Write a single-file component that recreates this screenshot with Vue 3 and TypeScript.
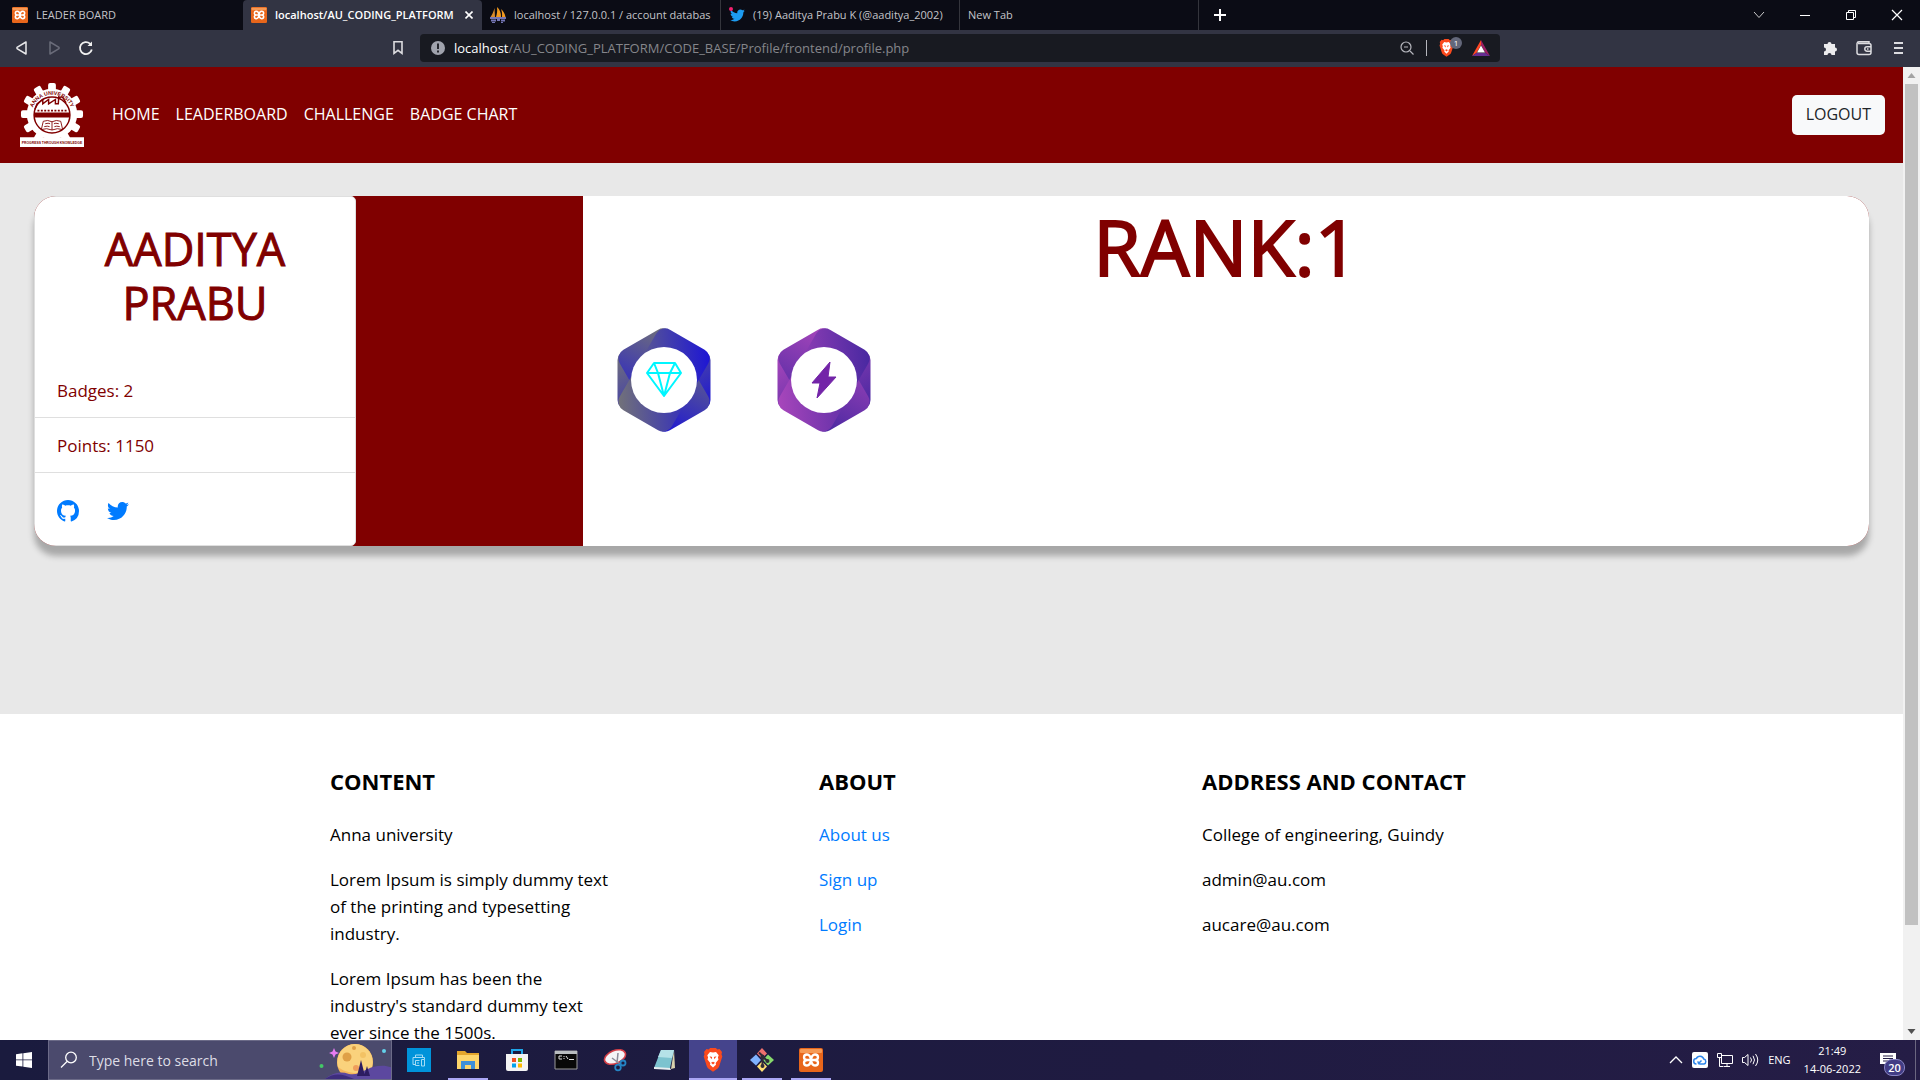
<script setup lang="ts">
interface Tab { title: string; icon: 'xampp' | 'pma' | 'twitter' | null; active?: boolean }
interface Badge { name: string; from: string; to: string; icon: 'diamond' | 'bolt' }

const tabs: Tab[] = [
  { title: 'LEADER BOARD', icon: 'xampp' },
  { title: 'localhost/AU_CODING_PLATFORM', icon: 'xampp', active: true },
  { title: 'localhost / 127.0.0.1 / account databas', icon: 'pma' },
  { title: '(19) Aaditya Prabu K (@aaditya_2002)', icon: 'twitter' },
  { title: 'New Tab', icon: null },
]
const navLinks = ['HOME', 'LEADERBOARD', 'CHALLENGE', 'BADGE CHART']
const badges: Badge[] = [
  { name: 'diamond', from: '#757575', to: '#1a12d8', icon: 'diamond' },
  { name: 'bolt', from: '#ab47bc', to: '#4527a0', icon: 'bolt' },
]
const aboutLinks = ['About us', 'Sign up', 'Login']
const teeth = Array.from({ length: 12 }, (_, i) => i * 30).filter((a) => a !== 180)
const apps = [
  { id: 'printer', label: 'Print', state: '' },
  { id: 'folder', label: 'File Explorer', state: 'open' },
  { id: 'store', label: 'Microsoft Store', state: '' },
  { id: 'cmd', label: 'Command Prompt', state: '' },
  { id: 'snip', label: 'Snipping Tool', state: '' },
  { id: 'notepad', label: 'Notepad', state: '' },
  { id: 'brave', label: 'Brave', state: 'open current' },
  { id: 'git', label: 'Git', state: 'open' },
  { id: 'xampp', label: 'XAMPP', state: 'open' },
]
const twitterPath = 'M459.37 151.716c.325 4.548.325 9.097.325 13.645 0 138.72-105.583 298.558-298.558 298.558-59.452 0-114.68-17.219-161.137-47.106 8.447.974 16.568 1.299 25.34 1.299 49.055 0 94.213-16.568 130.274-44.832-46.132-.975-84.792-31.188-98.112-72.772 6.498.974 12.995 1.624 19.818 1.624 9.421 0 18.843-1.3 27.614-3.573-48.081-9.747-84.143-51.98-84.143-102.985v-1.299c13.969 7.797 30.214 12.67 47.431 13.319-28.264-18.843-46.781-51.005-46.781-87.391 0-19.492 5.197-37.36 14.294-52.954 51.655 63.675 129.3 105.258 216.365 109.807-1.624-7.797-2.599-15.918-2.599-24.04 0-57.828 46.782-104.934 104.934-104.934 30.213 0 57.502 12.67 76.67 33.137 23.715-4.548 46.456-13.32 66.599-25.34-7.798 24.366-24.366 44.833-46.132 57.827 21.117-2.273 41.584-8.122 60.426-16.243-14.292 20.791-32.161 39.308-52.628 54.253z'
const githubPath = 'M8 0C3.58 0 0 3.58 0 8c0 3.54 2.29 6.53 5.47 7.59.4.07.55-.17.55-.38 0-.19-.01-.82-.01-1.49-2.01.37-2.53-.49-2.69-.94-.09-.23-.48-.94-.82-1.13-.28-.15-.68-.52-.01-.53.63-.01 1.08.58 1.23.82.72 1.21 1.87.87 2.33.66.07-.52.28-.87.51-1.07-1.78-.2-3.64-.89-3.64-3.95 0-.87.31-1.59.82-2.15-.08-.2-.36-1.02.08-2.12 0 0 .67-.21 2.2.82.64-.18 1.32-.27 2-.27.68 0 1.36.09 2 .27 1.53-1.04 2.2-.82 2.2-.82.44 1.1.16 1.92.08 2.12.51.56.82 1.27.82 2.15 0 3.07-1.87 3.75-3.65 3.95.29.25.54.73.54 1.48 0 1.07-.01 1.93-.01 2.2 0 .21.15.46.55.38A8.012 8.012 0 0 0 16 8c0-4.42-3.58-8-8-8z'
</script>

<template>
  <div class="screen">
    <svg width="0" height="0" class="defs" aria-hidden="true">
      <symbol id="xampp" viewBox="0 0 24 24">
        <rect width="24" height="24" rx="2" fill="#e8661b" />
        <rect x="1" y="1" width="22" height="4" rx="1" fill="#f79a55" />
        <path d="M12 12C11.500 8 10 6.500 8 6.500S5 8 5 9.300 6.300 12 8.500 12h7c2.200 0 3.500-1.300 3.500-2.700S18 6.500 16 6.500 12.500 8 12 12s-2 5.500-4 5.500-3-1.500-3-2.800S6.300 12 8.500 12h7c2.200 0 3.500 1.300 3.500 2.700s-1 2.800-3 2.800-3.500-1.500-4-5.500z" fill="none" stroke="#fff" stroke-width="2.300" stroke-linejoin="round" />
      </symbol>
      <symbol id="brave" viewBox="0 0 20 24">
        <path d="M14.500 1.500 16.500 1 19 4l-.5 2.200.8 2.300-3 9.500c-.4 1.200-1 2-2 2.700L10 23.800l-4.300-3.100c-1-.7-1.600-1.500-2-2.700l-3-9.500.8-2.300L1 4l2.500-3 2 .5L7.200 0h5.600z" fill="#fb4a1d" />
        <path d="m10 4.500 3-.5 2.700 3.300-.8 2.200.6 2-2.800 3.500.3 1.700L10 19.500l-3-2.800.3-1.700-2.800-3.500.6-2-.8-2.200L7 4z" fill="#fff" />
        <path d="m6.500 8.300 2.600.7-.5 2.200zM13.500 8.300l-2.600.7.500 2.200zM8 14.700l2-1 2 1-2 1.800z" fill="#fb4a1d" />
      </symbol>
    </svg>

    <header class="tabstrip">
      <button v-for="tab in tabs" :key="tab.title" class="tab" :class="{ active: tab.active }">
        <svg v-if="tab.icon === 'xampp'" width="16" height="16"><use href="#xampp" /></svg>
        <svg v-else-if="tab.icon === 'pma'" width="16" height="16" viewBox="0 0 16 16">
          <path d="M4.500 1 5 10H0.500C2 8 3.500 5 4.500 1z" fill="#d98b2b" />
          <path d="M7 0c3 2.500 4 6 4 10H6c1-3 1.500-6 1-10zM11 2c2.500 2 4 5 4.500 8H12c.3-3 0-5.500-1-8z" fill="#f39a1f" />
          <path d="M0 11h16M1 13.500h5M7 13h3M11 13.500h4" stroke="#7576b5" stroke-width="2" /><path d="M2 15.500h3M11 15.500h2" stroke="#7576b5" />
        </svg>
        <svg v-else-if="tab.icon === 'twitter'" width="16" height="16" viewBox="0 0 16 16">
          <g transform="translate(1 1) scale(.029)"><path :d="twitterPath" fill="#1d9bf0" /></g>
          <circle cx="2" cy="2" r="2" fill="#f4216e" />
        </svg>
        <span class="tab-title">{{ tab.title }}</span>
        <svg v-if="tab.active" width="8" height="8" viewBox="0 0 8 8"><path d="m.5.5 7 7m0-7-7 7" stroke="#fff" stroke-width="1.600" /></svg>
      </button>
      <button class="new-tab" aria-label="New tab"><svg width="12" height="12" viewBox="0 0 12 12"><path d="M6 0v12M0 6h12" stroke="#fff" stroke-width="2" /></svg></button>
      <div class="window-controls">
        <button aria-label="Search tabs"><svg width="12" height="12" viewBox="0 0 12 12" fill="none" stroke="#ccc"><path d="m1 3 5 5.500L11 3" /></svg></button>
        <button aria-label="Minimize"><svg width="12" height="12" viewBox="0 0 12 12"><path d="M1 6.500h10" stroke="#fff" /></svg></button>
        <button aria-label="Restore"><svg width="12" height="12" viewBox="0 0 12 12" fill="none" stroke="#fff"><path d="M1.500 3.500h7v7h-7zM3.500 3.500v-2h7v7h-2" /></svg></button>
        <button aria-label="Close"><svg width="12" height="12" viewBox="0 0 12 12"><path d="m1 1 10 10M11 1 1 11" stroke="#fff" stroke-width="1.200" /></svg></button>
      </div>
    </header>

    <div class="toolbar">
      <div class="history">
        <button aria-label="Back"><svg width="16" height="16" viewBox="0 0 16 16" fill="none" stroke="#e8e8ea" stroke-width="1.500" stroke-linejoin="round"><path d="M12 2v12L3 8.600V7.400z" /></svg></button>
        <button aria-label="Forward"><svg width="16" height="16" viewBox="0 0 16 16" fill="none" stroke="#6a6c7a" stroke-width="1.500" stroke-linejoin="round"><path d="M4 2v12l9-5.400V7.400z" /></svg></button>
        <button aria-label="Reload"><svg width="16" height="16" viewBox="0 0 16 16" fill="none" stroke="#f0f0f0" stroke-width="1.800"><path d="M13.800 9.500A6 6 0 1 1 12 3.600l1.500 1.500" /><path d="M14 1.500v4.500H9.500z" fill="#f0f0f0" stroke="none" /></svg></button>
      </div>
      <button class="bookmark" aria-label="Bookmark"><svg width="12" height="16" viewBox="0 0 12 16" fill="none" stroke="#dcdce0" stroke-width="1.600"><path d="M2 1.800h8v11.500l-4-3-4 3z" /></svg></button>
      <div class="address">
        <svg width="14" height="14" viewBox="0 0 14 14"><circle cx="7" cy="7" r="7" fill="#a0a3ad" /><path d="M7 2.500v5.500M7 9.500v2" stroke="#181a21" stroke-width="1.800" /></svg>
        <span class="url"><span class="host">localhost</span>/AU_CODING_PLATFORM/CODE_BASE/Profile/frontend/profile.php</span>
        <svg width="14" height="14" viewBox="0 0 14 14" fill="none" stroke="#b5b6bd" stroke-width="1.200"><circle cx="6" cy="6" r="5" /><path d="m10 10 3.500 3.500M4 6h4" /></svg>
        <span class="divider"></span>
        <span class="shield"><svg width="15" height="18"><use href="#brave" /></svg><span class="count">1</span></span>
        <svg width="18" height="16" viewBox="0 0 18 16"><path d="M9 0 0 16l4.500-3L9 5z" fill="#ff4724" /><path d="m9 0 9 16-4.500-3L9 5z" fill="#9e1f63" /><path d="M0 16h18l-4.500-3h-9z" fill="#662d91" /><path d="m9 5.500 4 7H5z" fill="#fff" /></svg>
      </div>
      <div class="tools">
        <button aria-label="Extensions"><svg width="16" height="16" viewBox="0 0 16 16"><path d="M2 4h3.500a2 2 0 1 1 4 0H13v3.500a2 2 0 1 1 0 4V15H9.500a2 2 0 0 0-4 0H2v-3.500a2 2 0 0 0 0-4z" fill="#ececee" /></svg></button>
        <button aria-label="Wallet"><svg width="16" height="16" viewBox="0 0 16 16" fill="none" stroke="#dcdce0" stroke-width="1.500"><path d="M13 3.500V1.800H3A2 2 0 0 0 1 3.500v9a2 2 0 0 0 2 2h10a2 2 0 0 0 2-2v-7a2 2 0 0 0-2-2H2M15 6.800h-4a2.200 2.200 0 0 0 0 4.400h4M11 9h1.500" /></svg></button>
        <button aria-label="Menu"><svg width="16" height="16" viewBox="0 0 16 16"><path d="M4 3h9M4 8h9M4 13h9" stroke="#dcdce0" stroke-width="2" /></svg></button>
      </div>
    </div>

    <div class="viewport">
      <div class="page">
        <nav class="navbar">
          <a href="#" class="brand" aria-label="Anna University">
            <svg width="64" height="64" viewBox="0 0 132 132">
              <g fill="#fff">
                <circle cx="66" cy="64" r="52" />
                <rect v-for="a in teeth" :key="a" x="58" y="0" width="16" height="20" rx="4" :transform="`rotate(${a} 66 64)`" />
              </g>
              <circle cx="66" cy="66" r="37" fill="#fff" stroke="maroon" stroke-width="3" />
              <path d="M31 54 35 43l12-9v9l12-9v9l14-9v9h6l1-16M80 28c3 4 6-2 9 3l6 10" fill="none" stroke="maroon" stroke-width="3" />
              <path d="M29 61h74v10H29z" fill="maroon" />
              <path d="M36 57h60" stroke="maroon" stroke-width="4" stroke-dasharray="4 3" />
              <path d="M48 79q9-4 18 1 9-5 18-1l4 17q-11-4-22 1-11-5-22-1zM66 80v17M52 84q7-2 10 0M50 90q7-2 11 0M80 84q-7-2-10 0M82 90q-7-2-11 0" fill="none" stroke="maroon" stroke-width="1.800" />
              <path id="crest-arc" d="M24 58A43 43 0 0 1 108 58" fill="none" />
              <text class="crest-name"><textPath href="#crest-arc" startOffset="50%" text-anchor="middle">ANNA UNIVERSITY</textPath></text>
              <path d="M0 112h132v20H0z" fill="#fff" />
              <text class="crest-motto" x="66" y="125" text-anchor="middle">PROGRESS THROUGH KNOWLEDGE</text>
            </svg>
          </a>
          <a v-for="link in navLinks" :key="link" href="#" class="nav-link">{{ link }}</a>
          <button class="logout">LOGOUT</button>
        </nav>

        <main class="main">
          <section class="profile">
            <aside class="side">
              <div class="person">
                <h1>AADITYA PRABU</h1>
                <ul>
                  <li>Badges: 2</li>
                  <li>Points: 1150</li>
                  <li class="social">
                    <a href="#" aria-label="GitHub"><svg width="22" height="22" viewBox="0 0 16 16"><path :d="githubPath" fill="#007bff" /></svg></a>
                    <a href="#" aria-label="Twitter"><svg width="22" height="22" viewBox="0 0 512 512"><path :d="twitterPath" fill="#007bff" /></svg></a>
                  </li>
                </ul>
              </div>
            </aside>
            <div class="result">
              <h2>RANK:1</h2>
              <div class="badges">
                <svg v-for="b in badges" :key="b.name" width="94" height="106" viewBox="-47 -53 94 106" role="img" :aria-label="b.name">
                  <defs>
                    <linearGradient :id="`g-${b.name}`" x1="0" y1="0" x2="1" y2="1"><stop offset="0" :stop-color="b.from" /><stop offset="1" :stop-color="b.to" /></linearGradient>
                  </defs>
                  <rect v-for="r in [0, 60, -60]" :key="r" x="-46.500" y="-30" width="93" height="60" rx="10" :transform="`rotate(${r})`" :fill="`url(#g-${b.name})`" />
                  <circle r="33" fill="#fff" />
                  <path v-if="b.icon === 'diamond'" d="M-10-17H11L17-7 0 16-17-7zM-17-7H17M-10-17-6-7 0 16 6-7l5-10" fill="none" stroke="#00f6ff" stroke-width="2" stroke-linejoin="round" />
                  <path v-else d="M6-18-12 3h8L-7 18 12-3H4z" fill="#7324a8" stroke="#7324a8" stroke-linejoin="round" />
                </svg>
              </div>
            </div>
          </section>
        </main>

        <footer class="footer">
          <div class="footer-grid">
            <section>
              <h3>CONTENT</h3>
              <p>Anna university</p>
              <p>Lorem Ipsum is simply dummy text of the printing and typesetting industry.</p>
              <p>Lorem Ipsum has been the industry's standard dummy text ever since the 1500s.</p>
            </section>
            <section>
              <h3>ABOUT</h3>
              <p v-for="link in aboutLinks" :key="link"><a href="#">{{ link }}</a></p>
            </section>
            <section>
              <h3>ADDRESS AND CONTACT</h3>
              <p>College of engineering, Guindy</p>
              <p>admin@au.com</p>
              <p>aucare@au.com</p>
            </section>
          </div>
        </footer>
      </div>
      <div class="scrollbar">
        <svg width="17" height="17" viewBox="0 0 17 17"><path d="m8.500 6 4 5h-8z" fill="#a3a3a3" /></svg>
        <div class="track"><div class="thumb"></div></div>
        <svg width="17" height="17" viewBox="0 0 17 17"><path d="m8.500 11 4-5h-8z" fill="#505050" /></svg>
      </div>
    </div>

    <div class="taskbar">
      <button class="start" aria-label="Start"><svg width="16" height="16" viewBox="0 0 16 16" fill="#fff"><path d="M0 2.200 6.500 1.300v6.200H0zM7.300 1.200 16 0v7.500H7.300zM0 8.300h6.500v6.300L0 13.700zM7.300 8.300H16V16l-8.700-1.200z" /></svg></button>
      <label class="search">
        <svg width="18" height="18" viewBox="0 0 18 18" fill="none" stroke="#fff" stroke-width="1.300"><circle cx="11" cy="6.500" r="5.300" /><path d="m7 10.500-6 6" /></svg>
        <input type="text" placeholder="Type here to search" aria-label="Search" />
        <svg width="75" height="38" viewBox="-3 0 75 38">
          <path d="m15 7 1.500 3.500L20 12l-3.500 1.500L15 17l-1.500-3.500L10 12l3.500-1.500z" fill="#e67cf2" />
          <circle cx="2.500" cy="25" r="2" fill="#44c767" /><circle cx="65" cy="10" r="2" fill="#63d1ea" />
          <circle cx="36" cy="21" r="18" fill="#f5b65c" /><path d="M36 3a18 18 0 0 1 17 23C44 36 26 32 19 26A18 18 0 0 1 36 3z" fill="#fad27c" />
          <g fill="#dfa047"><circle cx="28" cy="16" r="4.500" /><circle cx="44" cy="14" r="3" fill="#f3c264" /><circle cx="35" cy="7" r="2" /><circle cx="37" cy="27" r="3" fill="#ef9e5c" /></g>
          <path d="M6 38c7-6 15-8 24-5 10 2 16-5 24-7s15-2 21 2v10z" fill="#5c489f" /><path d="M6 38c10-7 18-5 29 0z" fill="#3d2d7d" />
          <path d="m42 19-4 16h8zM48 25l-3 10h6z" fill="#2d1c61" />
        </svg>
      </label>
      <div class="apps">
        <button v-for="app in apps" :key="app.id" class="app" :class="app.state" :aria-label="app.label">
          <svg v-if="app.id === 'printer'" width="24" height="24" viewBox="0 0 24 24"><path d="M0 0h24v24H0z" fill="#0093da" /><g fill="none" stroke="#a5dcf5"><path d="M8.500 9.500V7h7v2.500M8 16.500H6v-7h11.500v2M12.500 12.500h-4v5h4M14.500 11.500h3v6.500h-3zM10 15h2" /></g></svg>
          <svg v-else-if="app.id === 'folder'" width="24" height="24" viewBox="0 0 24 24"><path d="M1 3h8l2 2h12v16H1z" fill="#e3a52c" /><path d="M1 7h22v14H1z" fill="#fdd56b" /><path d="M5 21v-8h14v8h-4v-4H9v4z" fill="#3d8fd9" /></svg>
          <svg v-else-if="app.id === 'store'" width="24" height="24" viewBox="0 0 24 24"><path d="M7 7V2h10v5" fill="none" stroke="#1fa6e8" stroke-width="2" /><path d="M1 6h22v15a2 2 0 0 1-2 2H3a2 2 0 0 1-2-2z" fill="#f4f4f4" /><path d="M7 10h4v4H7z" fill="#f25022" /><path d="M13 10h4v4h-4z" fill="#7fba00" /><path d="M7 15.500h4v4H7z" fill="#00a4ef" /><path d="M13 15.500h4v4h-4z" fill="#ffb900" /></svg>
          <svg v-else-if="app.id === 'cmd'" width="24" height="24" viewBox="0 0 24 24"><path d="M1 3h22v18H1z" fill="#080808" stroke="#9a9a9a" /><path d="M1 3h22v3H1z" fill="#b9bdc0" /><path d="M8 8H5v3h3M10 8v1M10 10v1M12 8l2 3M15 11.500h5" fill="none" stroke="#ddd" /></svg>
          <svg v-else-if="app.id === 'snip'" width="24" height="24" viewBox="0 0 24 24"><ellipse cx="12" cy="9" rx="11" ry="6.500" fill="#f5f5f7" stroke="#d33e47" stroke-width="1.600" transform="rotate(-22 12 9)" /><path d="m9 10 8 6M15 5l-1 10" stroke="#8c8c99" stroke-width="1.500" /><g fill="none" stroke="#2584c4" stroke-width="1.800"><circle cx="20" cy="15" r="2.500" /><circle cx="15" cy="19.500" r="2.800" /></g></svg>
          <svg v-else-if="app.id === 'notepad'" width="24" height="24" viewBox="0 0 24 24"><path d="m22 2 1 18-4 1z" fill="#d9d2ad" /><path d="M9 2h13l-4 18H2z" fill="#7cc3cf" /><path d="M9 2h13l-2 8L6 9z" fill="#b5e2e8" /><path d="m2 19 16 1 1 2-17-1z" fill="#e7eef0" /></svg>
          <svg v-else-if="app.id === 'brave'" width="20" height="24"><use href="#brave" /></svg>
          <svg v-else-if="app.id === 'git'" width="24" height="24" viewBox="0 0 24 24"><path d="m12 0 5 5.500-5 5-5-5z" fill="#f0716e" /><path d="m6 6.500 5 5.500-5 5.500L0 12z" fill="#80b3ff" /><path d="m18 6.500 6 5.500-6 5.500-5-5.500z" fill="#87d96c" /><path d="m12 13.500 5 5-5 5.500-5-5.500z" fill="#ffdf73" /><path d="M9 4.500 12.500 8v10M12.500 8.500l5 4.500" stroke="#2f2b37" stroke-width="2" fill="none" /><g fill="#2f2b37"><circle cx="12.500" cy="8.500" r="2" /><circle cx="12.500" cy="18" r="2" /><circle cx="17.500" cy="13" r="2" /></g></svg>
          <svg v-else width="24" height="24"><use href="#xampp" /></svg>
        </button>
      </div>
      <div class="tray">
        <svg width="14" height="16" viewBox="0 0 14 16" fill="none" stroke="#fff" stroke-width="1.300"><path d="m1 11 6-6 6 6" /></svg>
        <svg width="16" height="16" viewBox="0 0 16 16"><rect width="16" height="16" rx="2" fill="#fff" /><path d="M4.500 12a2.700 2.700 0 0 1-.2-5.400A4 4 0 0 1 11.800 7 2.600 2.600 0 0 1 12 12H8l-2.500-2.500M6 12 9.500 8.500" fill="none" stroke="#2f86eb" stroke-width="1.500" /></svg>
        <svg width="16" height="16" viewBox="0 0 16 16" fill="none" stroke="#fff"><path d="M4.500 3.500h11v8h-11zM7 14.500h6M10 11.500v3M.5 1.500h4v4h-4zM2.500 5.500v9h4" /></svg>
        <svg width="17" height="16" viewBox="0 0 17 16" fill="none" stroke="#fff"><path d="M.5 5.500h2l3.500-3v11l-3.500-3h-2zM8.500 5.500q2 2.500 0 5M11 3.800q3 4.200 0 8.400M13.500 2q4.500 6 0 12" /></svg>
        <span class="lang">ENG</span>
        <div class="clock"><span>21:49</span><span>14-06-2022</span></div>
        <button class="notes" aria-label="Notifications">
          <svg width="16" height="16" viewBox="0 0 16 16"><path d="M0 1h16v11H8l-3 3v-3H0z" fill="#fff" /><path d="M3 4h10M3 6.500h10M3 9h7" stroke="#241d45" /></svg>
          <span>20</span>
        </button>
      </div>
    </div>
  </div>
</template>

<style>
body { margin: 0; overflow: hidden; }
</style>

<style scoped>
* { box-sizing: border-box; }
.screen { height: 100vh; display: flex; flex-direction: column; font-family: "Open Sans", "Noto Sans", sans-serif; font-size: 17px; line-height: 27px; color: #000; }
.defs { position: absolute; }
svg { flex: none; display: block; }
button { border: 0; padding: 0; background: none; font: inherit; color: inherit; display: flex; align-items: center; justify-content: center; }
a { text-decoration: none; color: #007bff; }
h1, h2, h3, p, ul { margin: 0; padding: 0; }
ul { list-style: none; }

.tabstrip { flex: none; height: 30px; display: flex; background: #0b0c15; padding-left: 4px; }
.tab { flex: 0 1 239px; min-width: 0; justify-content: flex-start; gap: 8px; padding: 0 8px; border-right: 1px solid transparent; font-size: 11px; line-height: 16px; color: #c3c4c9; }
.tab:nth-child(n+3) { border-right-color: #34353c; }
.tab.active { background: #323443; color: #fff; font-weight: 600; border-radius: 4px 4px 0 0; }
.tab-title { flex: 1; min-width: 0; white-space: nowrap; text-align: left; }
.new-tab { width: 42px; }
.window-controls { margin-left: auto; display: flex; }
.window-controls button { width: 46px; }

.toolbar { flex: none; height: 37px; display: flex; align-items: center; padding-bottom: 1px; background: #323443; }
.history { flex: 0 1 376px; display: flex; gap: 16px; padding-left: 14px; }
.bookmark { width: 44px; }
.address { flex: 0 1 1080px; height: 28px; display: flex; align-items: center; gap: 9px; padding: 0 10px 0 11px; border-radius: 4px; background: #181a21; font-size: 13px; line-height: 18px; color: #85868b; }
.url { flex: 1; white-space: nowrap; }
.host { color: #fff; }
.divider { width: 1px; height: 16px; background: #b5b6bd; margin: 0 3px; }
.shield { position: relative; width: 24px; }
.count { position: absolute; left: 11px; top: -2px; width: 12px; height: 12px; border-radius: 6px; background: #63677a; color: #fff; font-size: 8px; line-height: 12px; text-align: center; }
.tools { flex: 1; display: flex; justify-content: flex-end; gap: 18px; padding-right: 14px; }

.viewport { flex: 1; min-height: 0; display: flex; }
.page { flex: 1; min-width: 0; overflow: hidden; background: #fff; }
.scrollbar { width: 17px; display: flex; flex-direction: column; background: #f1f1f1; }
.track { flex: 1; display: grid; grid-template-rows: 841fr 98fr; padding: 0 2px; }
.thumb { background: #c1c1c1; }

.navbar { height: 96px; display: flex; align-items: center; padding: 0 18px 0 20px; background: maroon; }
.brand { margin-right: 20px; }
.crest-name { font-family: "Liberation Sans", sans-serif; font-weight: 700; font-size: 11px; fill: maroon; }
.crest-motto { font-family: "Liberation Sans", sans-serif; font-weight: 700; font-size: 7px; fill: maroon; }
.nav-link, .logout { padding: 0 8px 2px; font-size: 16px; color: #fff; }
.logout { margin-left: auto; height: 40px; padding: 0 14px 2px; border-radius: 5px; background: #f8f9fa; color: #212529; }

.main { height: 551px; padding: 33px 34px; background: #e8e8e8; }
.profile { height: 350px; display: grid; grid-template-columns: 549fr 1286fr; overflow: hidden; border-radius: 22px; background: maroon; box-shadow: 0 10px 6px rgba(0, 0, 0, .28); }
.side { color: maroon; }
.person { width: 322px; height: 100%; border: 1px solid #dfdfdf; border-radius: 5px; background: #fff; overflow: hidden; }
h1 { width: 240px; margin: 25px auto 33px; font-size: 45px; line-height: 54px; font-weight: 500; text-align: center; -webkit-text-stroke: 1px maroon; }
li { height: 55px; padding: 14px 22px; border-bottom: 1px solid #dfdfdf; }
.social { height: auto; display: flex; align-items: center; gap: 28px; padding-top: 27px; border: 0; }
.result { background: #fff; }
h2 { padding-top: 3px; color: maroon; font-size: 77px; line-height: 96px; font-weight: 500; text-align: center; -webkit-text-stroke: 2px maroon; }
.badges { display: flex; gap: 66px; padding: 32px 34px; }

.footer { padding: 50px 0; }
.footer-grid { max-width: 1283px; margin: 0 auto; padding-left: 20px; display: grid; grid-template-columns: 489fr 383fr 391fr; }
h3 { margin-bottom: 26px; padding-top: 4px; font-size: 22px; line-height: 27px; font-weight: 700; }
p { max-width: 290px; margin-bottom: 18px; }

.taskbar { flex: none; height: 40px; display: flex; background: linear-gradient(90deg, #1a1b3e, #1f1b41 60%, #251d46); }
.start { width: 48px; }
.search { width: 344px; display: flex; align-items: center; padding-left: 11px; border: 1px solid #6c6b88; background: #4b4a6d; }
.search input { flex: 1; min-width: 0; margin-left: 11px; padding: 0; border: 0; outline: 0; background: none; font: inherit; font-size: 14px; color: #fff; }
.search input::placeholder { color: #dedde6; opacity: 1; }
.apps { display: flex; gap: 1px; margin-left: 3px; }
.app { position: relative; width: 48px; }
.current { background: #45448c; }
.open::after { content: ""; position: absolute; left: 4px; right: 4px; bottom: 0; height: 2px; background: #aba7f5; }
.current::after { left: 0; right: 0; }
.tray { margin-left: auto; display: flex; align-items: center; gap: 9px; padding-right: 4px; color: #fff; font-size: 11px; line-height: 18px; }
.lang { margin-right: 4px; }
.clock { display: flex; flex-direction: column; align-items: center; }
.notes { position: relative; width: 46px; height: 40px; padding-right: 10px; border-right: 1px solid #6b6680; }
.notes span { position: absolute; left: 14px; top: 19px; width: 21px; height: 17px; border: 1px solid #8884c4; border-radius: 8px; background: #423d85; font-size: 11px; line-height: 15px; font-weight: 600; }
</style>
